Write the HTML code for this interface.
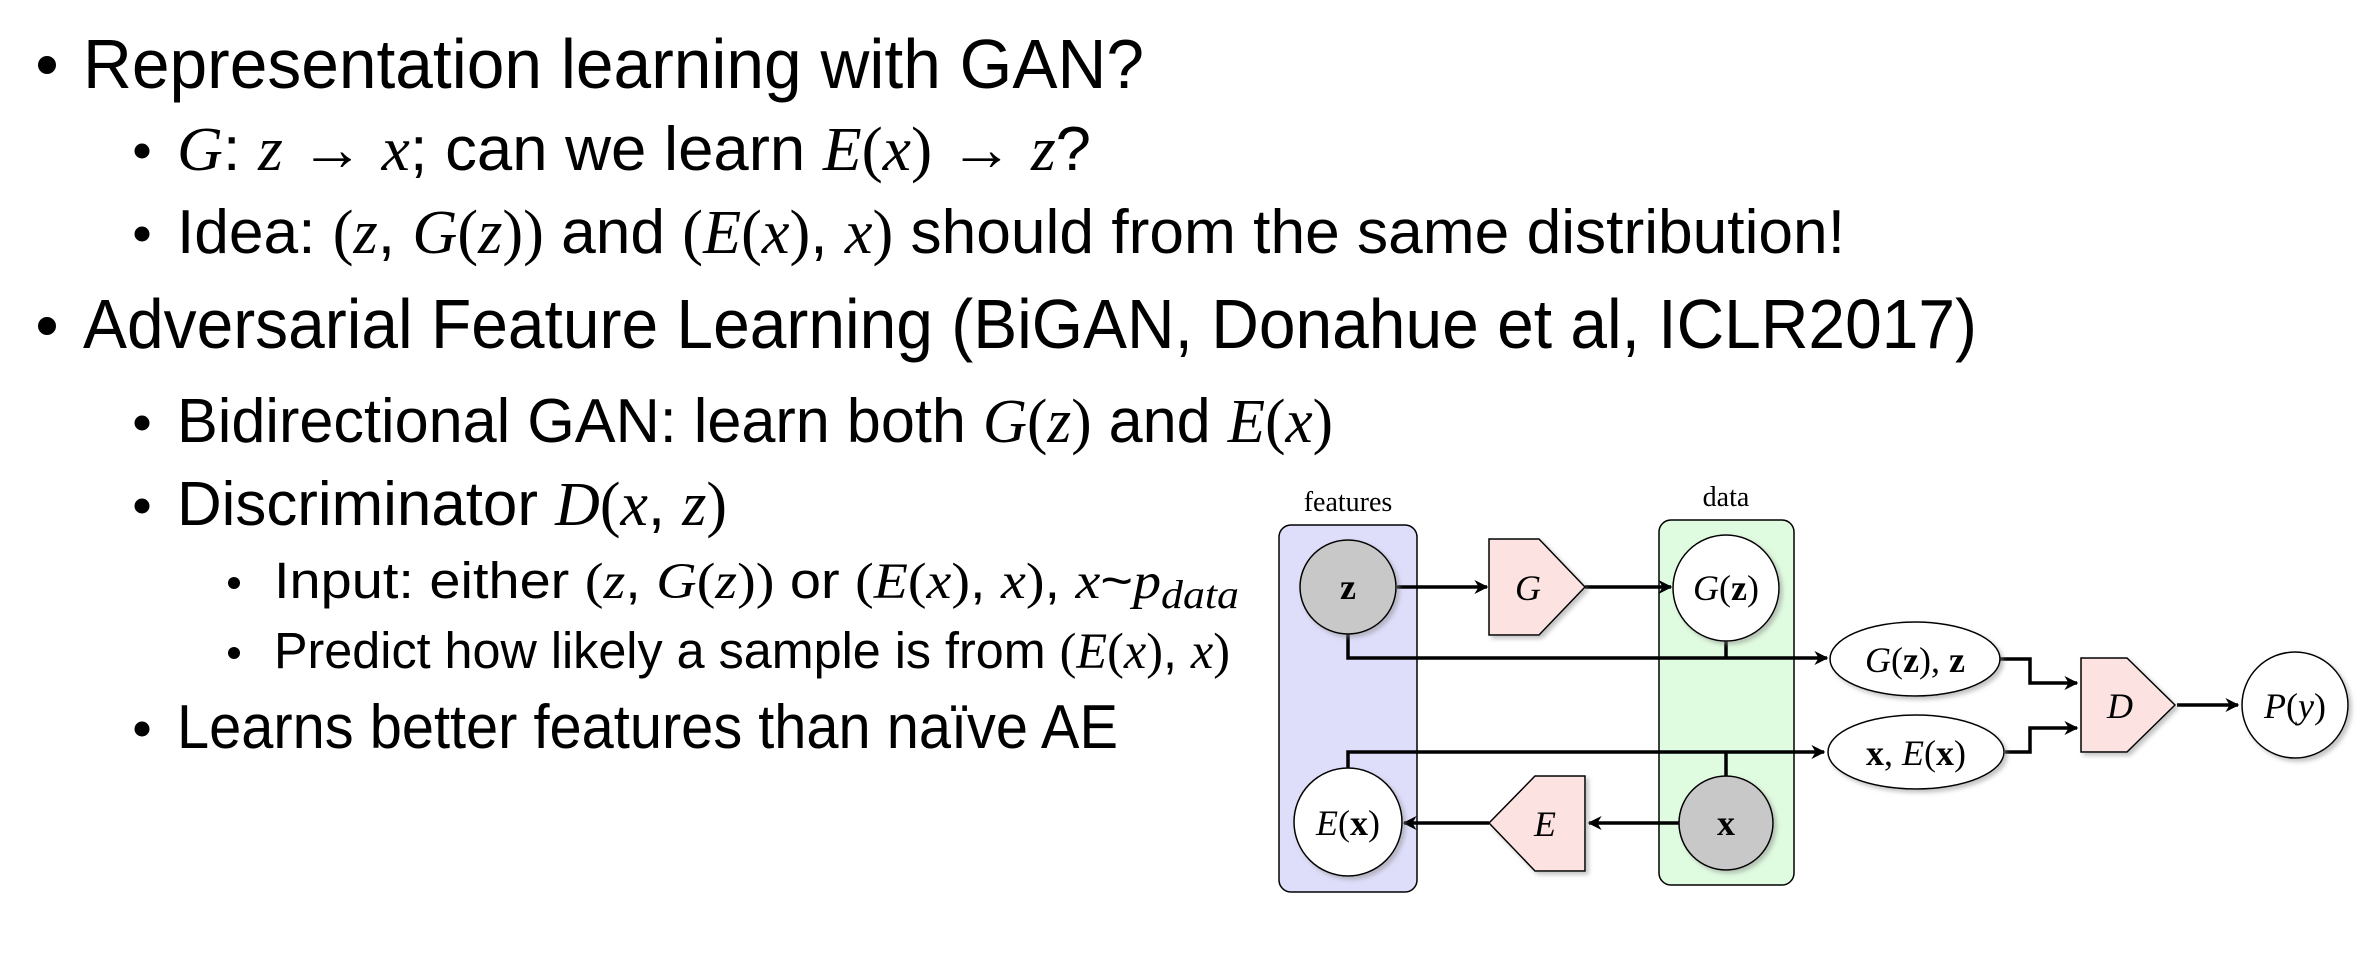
<!DOCTYPE html>
<html><head><meta charset="utf-8"><style>
html,body{margin:0;padding:0;background:#fff;}
svg{display:block}
.t{font-family:"Liberation Sans",sans-serif;fill:#000}
.m{font-family:"Liberation Serif",serif;font-style:italic}
.s{font-family:"Liberation Serif",serif;fill:#000}
.r{font-style:normal}
</style></head><body>
<svg width="2375" height="953" viewBox="0 0 2375 953" xmlns="http://www.w3.org/2000/svg">
<defs>
<marker id="ar" viewBox="0 0 10 10" refX="9" refY="5" markerWidth="4" markerHeight="4" orient="auto" markerUnits="strokeWidth"><path d="M0,0 L10,5 L0,10 L3,5 Z" fill="#000"/></marker>
<filter id="sh" x="-20%" y="-20%" width="150%" height="150%"><feDropShadow dx="3" dy="3" stdDeviation="2" flood-color="#888" flood-opacity="0.5"/></filter>
</defs>
<rect width="2375" height="953" fill="#fff"/>

<circle cx="47" cy="65" r="9"/>
<circle cx="47" cy="326" r="9"/>
<circle cx="142" cy="151" r="7.5"/>
<circle cx="142" cy="234" r="7.5"/>
<circle cx="142" cy="423" r="7.5"/>
<circle cx="142" cy="506" r="7.5"/>
<circle cx="142" cy="729" r="7.5"/>
<circle cx="234" cy="583" r="6"/>
<circle cx="234" cy="653" r="6"/>

<text class="t" x="83" y="88" font-size="70" textLength="1061" lengthAdjust="spacingAndGlyphs">Representation learning with GAN?</text>
<text class="t" x="177" y="170" font-size="62" textLength="914" lengthAdjust="spacingAndGlyphs"><tspan class="m">G</tspan>: <tspan class="m">z</tspan> → <tspan class="m">x</tspan>; can we learn <tspan class="m">E</tspan><tspan class="m r">(</tspan><tspan class="m">x</tspan><tspan class="m r">)</tspan> → <tspan class="m">z</tspan>?</text>
<text class="t" x="177" y="253" font-size="62" textLength="1668" lengthAdjust="spacingAndGlyphs">Idea: <tspan class="m r">(</tspan><tspan class="m">z</tspan>, <tspan class="m">G</tspan><tspan class="m r">(</tspan><tspan class="m">z</tspan><tspan class="m r">))</tspan> and <tspan class="m r">(</tspan><tspan class="m">E</tspan><tspan class="m r">(</tspan><tspan class="m">x</tspan><tspan class="m r">)</tspan>, <tspan class="m">x</tspan><tspan class="m r">)</tspan> should from the same distribution!</text>
<text class="t" x="83" y="348" font-size="70" textLength="1894" lengthAdjust="spacingAndGlyphs">Adversarial Feature Learning (BiGAN, Donahue et al, ICLR2017)</text>
<text class="t" x="177" y="442" font-size="62" textLength="1156" lengthAdjust="spacingAndGlyphs">Bidirectional GAN: learn both <tspan class="m">G</tspan><tspan class="m r">(</tspan><tspan class="m">z</tspan><tspan class="m r">)</tspan> and <tspan class="m">E</tspan><tspan class="m r">(</tspan><tspan class="m">x</tspan><tspan class="m r">)</tspan></text>
<text class="t" x="177" y="525" font-size="62" textLength="550" lengthAdjust="spacingAndGlyphs">Discriminator <tspan class="m">D</tspan><tspan class="m r">(</tspan><tspan class="m">x</tspan>, <tspan class="m">z</tspan><tspan class="m r">)</tspan></text>
<text class="t" x="274" y="598" font-size="51" textLength="965" lengthAdjust="spacingAndGlyphs">Input: either <tspan class="m r">(</tspan><tspan class="m">z</tspan>, <tspan class="m">G</tspan><tspan class="m r">(</tspan><tspan class="m">z</tspan><tspan class="m r">))</tspan> or <tspan class="m r">(</tspan><tspan class="m">E</tspan><tspan class="m r">(</tspan><tspan class="m">x</tspan><tspan class="m r">)</tspan>, <tspan class="m">x</tspan><tspan class="m r">)</tspan>, <tspan class="m">x</tspan>~<tspan class="m">p</tspan><tspan class="m" font-size="40" dy="10">data</tspan></text>
<text class="t" x="274" y="668" font-size="51" textLength="956" lengthAdjust="spacingAndGlyphs">Predict how likely a sample is from <tspan class="m r">(</tspan><tspan class="m">E</tspan><tspan class="m r">(</tspan><tspan class="m">x</tspan><tspan class="m r">)</tspan>, <tspan class="m">x</tspan><tspan class="m r">)</tspan></text>
<text class="t" x="177" y="748" font-size="62" textLength="941" lengthAdjust="spacingAndGlyphs">Learns better features than naïve AE</text>

<text class="s" x="1348" y="511" font-size="28" text-anchor="middle">features</text>
<text class="s" x="1726" y="506" font-size="28" text-anchor="middle">data</text>
<rect x="1279" y="525" width="138" height="367" rx="12" fill="#dedefb" stroke="#000" stroke-width="1.5"/>
<rect x="1659" y="520" width="135" height="365" rx="12" fill="#e0fce0" stroke="#000" stroke-width="1.5"/>

<g stroke="#000" stroke-width="3.5" fill="none">
<line x1="1397" y1="587" x2="1487" y2="587" marker-end="url(#ar)"/>
<line x1="1585" y1="587" x2="1671" y2="587" marker-end="url(#ar)"/>
<polyline points="1348,634 1348,658 1827,658" marker-end="url(#ar)"/>
<line x1="1726" y1="640" x2="1726" y2="658"/>
<polyline points="1348,768 1348,752 1824,752" marker-end="url(#ar)"/>
<line x1="1726" y1="752" x2="1726" y2="776"/>
<line x1="1679" y1="823" x2="1589" y2="823" marker-end="url(#ar)"/>
<line x1="1489" y1="823" x2="1404" y2="823" marker-end="url(#ar)"/>
<polyline points="2000,659 2030,659 2030,683 2077,683" marker-end="url(#ar)"/>
<polyline points="2005,752 2030,752 2030,728 2077,728" marker-end="url(#ar)"/>
<line x1="2177" y1="705" x2="2238" y2="705" marker-end="url(#ar)"/>
</g>

<g stroke="#000" stroke-width="1.5" filter="url(#sh)">
<ellipse cx="1348" cy="587" rx="48" ry="47" fill="#c8c8c8"/>
<ellipse cx="1726" cy="588" rx="53" ry="53" fill="#fff"/>
<path d="M1489,539 L1539,539 L1585,587 L1539,635 L1489,635 Z" fill="#fde2e2"/>
<ellipse cx="1915" cy="659" rx="85" ry="37" fill="#fff"/>
<ellipse cx="1916" cy="752" rx="88" ry="37" fill="#fff"/>
<path d="M2081,658 L2127,658 L2175,705 L2127,752 L2081,752 Z" fill="#fde2e2"/>
<ellipse cx="2295" cy="705" rx="53" ry="53" fill="#fff"/>
<ellipse cx="1726" cy="823" rx="47" ry="47" fill="#c8c8c8"/>
<path d="M1585,776 L1535,776 L1489,823 L1535,871 L1585,871 Z" fill="#fde2e2"/>
<ellipse cx="1348" cy="822" rx="54" ry="54" fill="#fff"/>
</g>

<g class="s" font-size="36" text-anchor="middle">
<text x="1348" y="599" font-weight="bold">z</text>
<text x="1528" y="600" class="m">G</text>
<text x="1726" y="600"><tspan class="m">G</tspan>(<tspan font-weight="bold">z</tspan>)</text>
<text x="1915" y="672"><tspan class="m">G</tspan>(<tspan font-weight="bold">z</tspan>), <tspan font-weight="bold">z</tspan></text>
<text x="1916" y="765"><tspan font-weight="bold">x</tspan>, <tspan class="m">E</tspan>(<tspan font-weight="bold">x</tspan>)</text>
<text x="2120" y="718" class="m">D</text>
<text x="2295" y="718"><tspan class="m">P</tspan>(<tspan class="m">y</tspan>)</text>
<text x="1726" y="835" font-weight="bold">x</text>
<text x="1545" y="836" class="m">E</text>
<text x="1348" y="835"><tspan class="m">E</tspan>(<tspan font-weight="bold">x</tspan>)</text>
</g>
</svg>
</body></html>
